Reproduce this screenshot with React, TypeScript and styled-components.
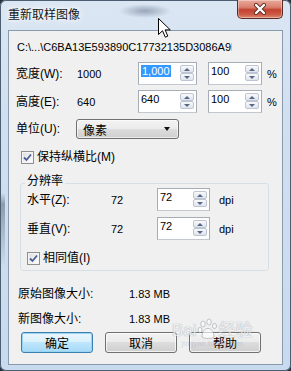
import React from "react";
import styled, { createGlobalStyle, css } from "styled-components";

const FONT = `"Liberation Sans", "Noto Sans CJK SC", sans-serif`;

const GlobalStyle = createGlobalStyle`
  html, body {
    margin: 0;
    padding: 0;
    background: #27313d;
  }
  body {
    width: 291px;
    height: 371px;
    overflow: hidden;
  }
`;

const Window = styled.div`
  position: relative;
  width: 291px;
  height: 371px;
  border-radius: 6px;
  overflow: hidden;
  box-shadow: inset 0 0 0 1px #4d5e73;
  background:
    linear-gradient(180deg, rgba(60, 75, 95, 0) 52%, rgba(60, 75, 95, 0.45) 55%, rgba(60, 75, 95, 0) 72%) left / 5px 100% no-repeat,
    linear-gradient(180deg, #dbe6f3 0%, #d1e0f0 30%, #c8daee 100%);
  font-family: ${FONT};
  color: #000;
  display: flex;
  flex-direction: column;
`;

const TitleBar = styled.div`
  height: 30px;
  flex: none;
  display: flex;
  align-items: flex-start;
  justify-content: space-between;
  padding: 0 8px;
  background: radial-gradient(ellipse 26px 7px at 145px 11px, rgba(50, 70, 100, 0.4), rgba(50, 70, 100, 0));
`;

const Title = styled.div`
  margin-top: 7px;
  font-size: 12px;
  line-height: 16px;
  color: #151515;
  text-shadow: 0 0 4px #fff, 0 0 8px #fff;
`;

const CloseButton = styled.div`
  width: 46px;
  height: 19px;
  box-sizing: border-box;
  border: 1px solid #5b2b26;
  border-top: none;
  border-radius: 0 0 5px 5px;
  background: linear-gradient(180deg, #e9a99b 0%, #d98170 40%, #c2412f 55%, #cc5a45 80%, #dd8a72 100%);
  box-shadow: inset 0 0 0 1px rgba(255, 255, 255, 0.35);
  display: flex;
  align-items: center;
  justify-content: center;
`;

const Client = styled.div`
  margin: 0 8px;
  height: 335px;
  box-sizing: border-box;
  border: 1px solid #8a9bb0;
  background: #f0f0f0;
  padding-top: 9px;
  display: flex;
  flex-direction: column;
  align-items: flex-start;
`;

const PathText = styled.div`
  margin-left: 8px;
  width: 215px;
  overflow: hidden;
  white-space: nowrap;
  font-size: 11px;
  line-height: 14px;
`;

const Row = styled.div<{ $top: number; $left: number; $h?: number }>`
  display: flex;
  align-items: center;
  height: ${(p) => p.$h ?? 23}px;
  margin-top: ${(p) => p.$top}px;
  padding-left: ${(p) => p.$left}px;
`;

const Label = styled.div<{ $w: number }>`
  width: ${(p) => p.$w}px;
  flex: none;
  font-size: 12px;
  line-height: 14px;
  white-space: nowrap;
`;

const Value = styled.div<{ $w: number }>`
  width: ${(p) => p.$w}px;
  flex: none;
  font-size: 11px;
  line-height: 14px;
`;

const Unit = styled.div<{ $gap: number }>`
  margin-left: ${(p) => p.$gap}px;
  font-size: 11px;
  line-height: 14px;
`;

const SpinFrame = styled.div<{ $w: number; $gap?: number }>`
  width: ${(p) => p.$w}px;
  height: 23px;
  margin-left: ${(p) => p.$gap ?? 0}px;
  flex: none;
  box-sizing: border-box;
  border: 1px solid #a7adb6;
  border-bottom-color: #c3c8cf;
  background: #fff;
  display: flex;
`;

const EditText = styled.div`
  flex: 1;
  padding: 2px 0 0 2px;
  font-size: 11px;
  line-height: 13px;
`;

const Selected = styled.span`
  background: #3399ff;
  color: #fff;
  padding: 0 1px;
`;

const Spinner = styled.div`
  width: 14px;
  margin: 2px 2px 3px 0;
  display: flex;
  flex-direction: column;
`;

const SpinButton = styled.div<{ $down?: boolean }>`
  flex: 1;
  box-sizing: border-box;
  border: 1px solid #bcc5d1;
  border-radius: 2px;
  background: linear-gradient(180deg, #f8f9fb 0%, #eceff3 50%, #e0e4ea 100%);
  display: flex;
  align-items: center;
  justify-content: center;

  &::after {
    content: "";
    width: 0;
    height: 0;
    border-left: 3px solid transparent;
    border-right: 3px solid transparent;
    ${(p) =>
      p.$down
        ? css`
            border-top: 3px solid #56688a;
          `
        : css`
            border-bottom: 3px solid #56688a;
          `}
  }
`;

const Select = styled.div`
  width: 103px;
  height: 20px;
  flex: none;
  box-sizing: border-box;
  border: 1px solid #707070;
  border-radius: 3px;
  background: linear-gradient(180deg, #f3f3f3 0%, #ebebeb 50%, #dddddd 50%, #cfcfcf 100%);
  box-shadow: inset 0 0 0 1px rgba(255, 255, 255, 0.6);
  display: flex;
  align-items: center;
  justify-content: space-between;
  padding: 0 8px 0 6px;
  font-size: 12px;

  &::after {
    content: "";
    border-left: 3.5px solid transparent;
    border-right: 3.5px solid transparent;
    border-top: 4px solid #111;
  }
`;

const CheckRow = styled.label<{ $top: number; $left: number }>`
  display: flex;
  align-items: center;
  gap: 3px;
  height: 14px;
  margin-top: ${(p) => p.$top}px;
  margin-left: ${(p) => p.$left}px;
  font-size: 12px;
  line-height: 14px;
`;

const CheckBox = styled.span`
  width: 13px;
  height: 13px;
  box-sizing: border-box;
  border: 1px solid #8e8f8f;
  background: linear-gradient(135deg, #dcdcdc 0%, #f6f6f6 70%, #fff 100%);
  box-shadow: inset 0 0 0 1px #f4f4f4;
  display: flex;
  align-items: center;
  justify-content: center;
`;

const GroupBox = styled.div`
  margin: 19px 0 0 11px;
  width: 249px;
  box-sizing: border-box;
  border: 1px solid #d5dfe5;
  border-radius: 3px;
  padding-bottom: 5px;
  display: flex;
  flex-direction: column;
  align-items: flex-start;
`;

const GroupTitle = styled.div`
  margin: -10px 0 0 4px;
  padding: 0 2px;
  background: #f0f0f0;
  font-size: 12px;
  line-height: 14px;
`;

const ButtonRow = styled.div`
  display: flex;
  gap: 12px;
  margin: 6px 0 0 12px;
`;

const Button = styled.div<{ $primary?: boolean }>`
  width: 72px;
  height: 21px;
  box-sizing: border-box;
  border: 1px solid ${(p) => (p.$primary ? "#3c7fb1" : "#707070")};
  border-radius: 3px;
  background: ${(p) =>
    p.$primary
      ? "linear-gradient(180deg, #eaf6fd 0%, #d9f0fc 50%, #bee6fd 50%, #a7d9f5 100%)"
      : "linear-gradient(180deg, #f2f2f2 0%, #ebebeb 50%, #dddddd 50%, #cfcfcf 100%)"};
  box-shadow: inset 0 0 0 1px ${(p) => (p.$primary ? "#9ad4f3" : "rgba(255,255,255,0.7)")};
  display: flex;
  align-items: center;
  justify-content: center;
  font-size: 12px;
`;

const Cursor = styled.svg`
  position: absolute;
  left: 158px;
  top: 18px;
`;

const Watermark = styled.div`
  position: absolute;
  left: 172px;
  top: 318px;
  display: flex;
  flex-direction: column;
  align-items: center;
  pointer-events: none;
  opacity: 0.75;
`;

const MarkMain = styled.div`
  display: flex;
  align-items: flex-end;
  font-family: "Liberation Sans", "Noto Sans CJK SC", sans-serif;
  font-size: 17px;
  line-height: 18px;
  color: rgba(255, 255, 255, 0.85);
  text-shadow: 0 0 1px #9aa1aa, 0 0 1px #9aa1aa;
`;

const MarkSub = styled.div`
  font-size: 7px;
  line-height: 8px;
  color: rgba(170, 175, 185, 0.6);
  letter-spacing: 0.3px;
`;

const Spin = ({ w, gap, children }: { w: number; gap?: number; children: React.ReactNode }) => (
  <SpinFrame $w={w} $gap={gap}>
    <EditText>{children}</EditText>
    <Spinner>
      <SpinButton />
      <SpinButton $down />
    </Spinner>
  </SpinFrame>
);

const Check = () => (
  <CheckBox>
    <svg width="9" height="9" viewBox="0 0 9 9">
      <path d="M1 4.5 L3.5 7 L8 1.5" fill="none" stroke="#4a5f97" strokeWidth="1.8" />
    </svg>
  </CheckBox>
);

export default function App() {
  return (
    <>
      <GlobalStyle />
      <Window>
        <TitleBar>
          <Title>重新取样图像</Title>
          <CloseButton>
            <svg width="14" height="12" viewBox="0 0 14 12">
              <path d="M3 2 L11 10 M11 2 L3 10" stroke="#5a2a22" strokeWidth="4" strokeLinecap="round" />
              <path d="M3 2 L11 10 M11 2 L3 10" stroke="#fff" strokeWidth="2.4" strokeLinecap="round" />
            </svg>
          </CloseButton>
        </TitleBar>

        <Client>
          <PathText>C:\...\C6BA13E593890C17732135D3086A9E</PathText>

          <Row $top={8} $left={7}>
            <Label $w={61}>宽度(W):</Label>
            <Value $w={61}>1000</Value>
            <Spin w={59}>
              <Selected>1,000</Selected>
            </Spin>
            <Spin w={54} gap={11}>100</Spin>
            <Unit $gap={5}>%</Unit>
          </Row>

          <Row $top={5} $left={7}>
            <Label $w={61}>高度(E):</Label>
            <Value $w={61}>640</Value>
            <Spin w={59}>640</Spin>
            <Spin w={54} gap={11}>100</Spin>
            <Unit $gap={5}>%</Unit>
          </Row>

          <Row $top={6} $left={7} $h={20}>
            <Label $w={60}>单位(U):</Label>
            <Select>像素</Select>
          </Row>

          <CheckRow $top={11} $left={12}>
            <Check />
            保持纵横比(M)
          </CheckRow>

          <GroupBox>
            <GroupTitle>分辨率</GroupTitle>
            <Row $top={0} $left={6}>
              <Label $w={84}>水平(Z):</Label>
              <Value $w={46}>72</Value>
              <Spin w={53}>72</Spin>
              <Unit $gap={9}>dpi</Unit>
            </Row>
            <Row $top={6} $left={6}>
              <Label $w={84}>垂直(V):</Label>
              <Value $w={46}>72</Value>
              <Spin w={53}>72</Spin>
              <Unit $gap={9}>dpi</Unit>
            </Row>
            <CheckRow $top={11} $left={6}>
              <Check />
              相同值(I)
            </CheckRow>
          </GroupBox>

          <Row $top={16} $left={9} $h={14}>
            <Label $w={111}>原始图像大小:</Label>
            <Value $w={80}>1.83 MB</Value>
          </Row>
          <Row $top={11} $left={9} $h={14}>
            <Label $w={111}>新图像大小:</Label>
            <Value $w={80}>1.83 MB</Value>
          </Row>

          <ButtonRow>
            <Button $primary>确定</Button>
            <Button>取消</Button>
            <Button>帮助</Button>
          </ButtonRow>
        </Client>

        <Watermark>
          <MarkMain>
            Bai
            <svg width="22" height="22" viewBox="0 0 22 22">
              <g fill="rgba(255,255,255,0.85)" stroke="#9aa1aa" strokeWidth="0.8">
                <ellipse cx="6" cy="6" rx="2.2" ry="3" />
                <ellipse cx="12" cy="4" rx="2.2" ry="3" />
                <ellipse cx="17.5" cy="8" rx="2" ry="2.6" />
                <ellipse cx="3" cy="12" rx="2" ry="2.6" />
                <path d="M5 19 C5 13 8 10.5 11 10.5 C14 10.5 17 13 17 19 C14 21 8 21 5 19 Z" />
              </g>
            </svg>
            经验
          </MarkMain>
          <MarkSub>jingyan.baidu.com</MarkSub>
        </Watermark>

        <Cursor width="14" height="21" viewBox="0 0 14 21">
          <path
            d="M0.5 0.5 L0.5 16.5 L4.5 12.8 L7.3 19.2 L9.8 18.1 L7.1 11.9 L12.3 11.9 Z"
            fill="#fff"
            stroke="#000"
            strokeWidth="1"
            strokeLinejoin="round"
          />
        </Cursor>
      </Window>
    </>
  );
}
